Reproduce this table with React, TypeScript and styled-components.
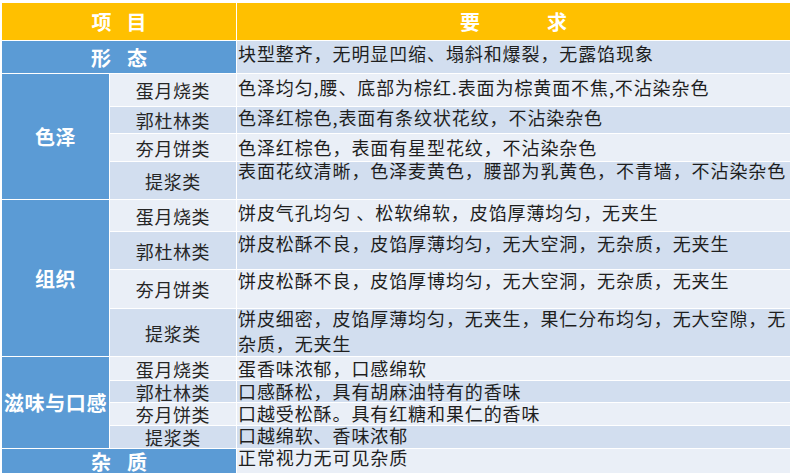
import React from "react";
import styled, { createGlobalStyle } from "styled-components";

const GlobalStyle = createGlobalStyle`
  html, body {
    margin: 0;
    padding: 0;
    background: #ffffff;
  }
  body {
    font-family: "Noto Sans CJK SC", "Noto Sans", sans-serif;
  }
`;

const Page = styled.div`
  padding: 3px 0 0 2px;
`;

const Table = styled.div`
  display: grid;
  grid-template-columns: 107px 126px 553px;
  grid-template-rows: 37px 32px 32px 26px 27px 37px 31px 37px 38px 47px 23px 21px 22px 22px 24px;
  gap: 1px;
  background: #ffffff;
  width: 788px;
`;

const HeaderCell = styled.div<{ $span?: number }>`
  grid-column: span ${(p) => p.$span ?? 1};
  background: #ffc000;
  color: #ffffff;
  font-weight: 700;
  font-size: 20px;
  display: flex;
  align-items: center;
  justify-content: center;
`;

const CategoryCell = styled.div<{ $rows?: number; $cols?: number }>`
  grid-row: span ${(p) => p.$rows ?? 1};
  grid-column: span ${(p) => p.$cols ?? 1};
  background: #5b9bd5;
  color: #ffffff;
  font-weight: 700;
  font-size: 20px;
  letter-spacing: 0.6px;
  display: flex;
  align-items: center;
  justify-content: center;
  white-space: nowrap;
`;

const Spaced = styled.span<{ $gap: number }>`
  display: flex;
  gap: ${(p) => p.$gap}px;
  letter-spacing: 0;
`;

const ProductCell = styled.div<{ $dark: boolean }>`
  background: ${(p) => (p.$dark ? "#d2deef" : "#eaeff7")};
  color: #262626;
  font-size: 18px;
  line-height: 20px;
  letter-spacing: 0.6px;
  display: flex;
  align-items: center;
  justify-content: center;
  white-space: nowrap;
`;

const RequirementCell = styled.div<{ $dark: boolean }>`
  background: ${(p) => (p.$dark ? "#d2deef" : "#eaeff7")};
  color: #1e1e1e;
  font-size: 18px;
  letter-spacing: 0.9px;
  padding-left: 1px;
`;

const RequirementText = styled.div<{ $shift: number; $lh: number }>`
  line-height: ${(p) => p.$lh}px;
  margin-top: ${(p) => p.$shift}px;
`;

type Item = { product: string; text: string; shift: number; lh?: number };
type Section =
  | { kind: "single"; label: string[]; gap: number; text: string; shift: number }
  | { kind: "group"; label: string; items: Item[] };

const sections: Section[] = [
  {
    kind: "single",
    label: ["形", "态"],
    gap: 16,
    text: "块型整齐，无明显凹缩、塌斜和爆裂，无露馅现象",
    shift: 2,
  },
  {
    kind: "group",
    label: "色泽",
    items: [
      { product: "蛋月烧类", text: "色泽均匀,腰、底部为棕红.表面为棕黄面不焦,不沾染杂色", shift: 3 },
      { product: "郭杜林类", text: "色泽红棕色,表面有条纹状花纹，不沾染杂色", shift: 0 },
      { product: "夯月饼类", text: "色泽红棕色，表面有星型花纹，不沾染杂色", shift: 3 },
      { product: "提浆类", text: "表面花纹清晰，色泽麦黄色，腰部为乳黄色，不青墙，不沾染杂色", shift: -2 },
    ],
  },
  {
    kind: "group",
    label: "组织",
    items: [
      { product: "蛋月烧类", text: "饼皮气孔均匀 、松软绵软，皮馅厚薄均匀，无夹生", shift: 2 },
      { product: "郭杜林类", text: "饼皮松酥不良，皮馅厚薄均匀，无大空洞，无杂质，无夹生", shift: 1 },
      { product: "夯月饼类", text: "饼皮松酥不良，皮馅厚博均匀，无大空洞，无杂质，无夹生", shift: 0 },
      {
        product: "提浆类",
        text: "饼皮细密，皮馅厚薄均匀，无夹生，果仁分布均匀，无大空隙，无杂质，无夹生",
        shift: -3,
        lh: 25,
      },
    ],
  },
  {
    kind: "group",
    label: "滋味与口感",
    items: [
      { product: "蛋月烧类", text: "蛋香味浓郁，口感绵软", shift: 1 },
      { product: "郭杜林类", text: "口感酥松，具有胡麻油特有的香味", shift: 0 },
      { product: "夯月饼类", text: "口越受松酥。具有红糖和果仁的香味", shift: 0 },
      { product: "提浆类", text: "口越绵软、香味浓郁", shift: -1 },
    ],
  },
  {
    kind: "single",
    label: ["杂", "质"],
    gap: 16,
    text: "正常视力无可见杂质",
    shift: -2,
  },
];

export default function App() {
  let rowIndex = 1;
  const cells: React.ReactNode[] = [];
  sections.forEach((section, si) => {
    if (section.kind === "single") {
      rowIndex += 1;
      const dark = rowIndex % 2 === 0;
      cells.push(
        <CategoryCell key={`s${si}`} $cols={2}>
          <Spaced $gap={section.gap}>
            {section.label.map((c) => (
              <span key={c}>{c}</span>
            ))}
          </Spaced>
        </CategoryCell>,
        <RequirementCell key={`s${si}t`} $dark={dark}>
          <RequirementText $shift={section.shift} $lh={20}>
            {section.text}
          </RequirementText>
        </RequirementCell>
      );
    } else {
      cells.push(
        <CategoryCell key={`g${si}`} $rows={section.items.length}>
          {section.label}
        </CategoryCell>
      );
      section.items.forEach((item, ii) => {
        rowIndex += 1;
        const dark = rowIndex % 2 === 0;
        cells.push(
          <ProductCell key={`g${si}p${ii}`} $dark={dark}>
            {item.product}
          </ProductCell>,
          <RequirementCell key={`g${si}t${ii}`} $dark={dark}>
            <RequirementText $shift={item.shift} $lh={item.lh ?? 20}>
              {item.text}
            </RequirementText>
          </RequirementCell>
        );
      });
    }
  });

  return (
    <>
      <GlobalStyle />
      <Page>
        <Table>
          <HeaderCell $span={2}>
            <Spaced $gap={15}>
              <span>项</span>
              <span>目</span>
            </Spaced>
          </HeaderCell>
          <HeaderCell>
            <Spaced $gap={67}>
              <span>要</span>
              <span>求</span>
            </Spaced>
          </HeaderCell>
          {cells}
        </Table>
      </Page>
    </>
  );
}
